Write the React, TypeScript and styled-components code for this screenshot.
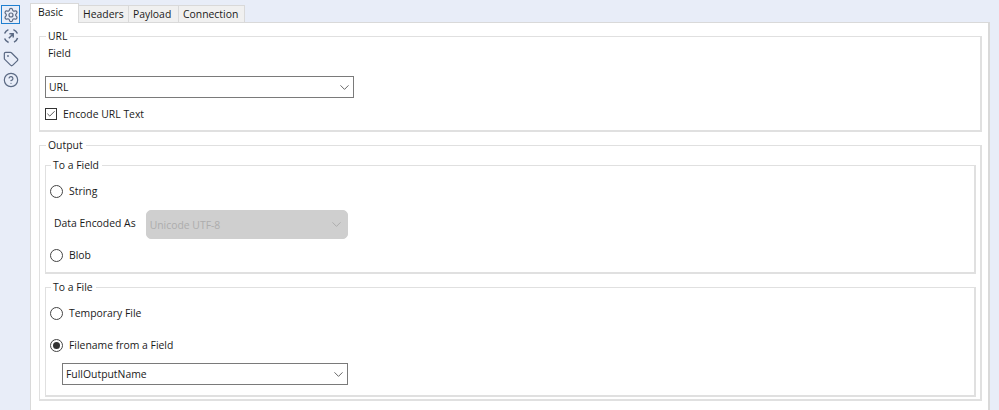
import { Settings, Tag, CircleHelp, ChevronDown, Check } from 'lucide-react';
import styled, { createGlobalStyle } from 'styled-components';

const Global = createGlobalStyle`
  html, body {
    margin: 0;
    height: 100%;
    background: #e8edf8;
    overflow: hidden;
  }
  body {
    font-family: "Open Sans", "Noto Sans", sans-serif;
    font-size: 10.4px;
    color: #1a1a1a;
  }
`;

const Page = styled.div`
  width: 999px;
  height: 410px;
  display: flex;
  box-sizing: border-box;
  padding-top: 1px;
`;

const Sidebar = styled.div`
  width: 30px;
  flex: none;
  display: flex;
  flex-direction: column;
  align-items: flex-start;
  gap: 2px;
  padding: 4px 0 0 1px;
  box-sizing: border-box;
`;

const SideButton = styled.div<{ $active?: boolean; $push?: boolean }>`
  width: 19px;
  height: 19px;
  box-sizing: border-box;
  display: flex;
  align-items: center;
  justify-content: center;
  color: #5b6a84;
  border: 1px solid ${p => (p.$active ? '#1f7fd0' : 'transparent')};
  margin-top: ${p => (p.$push ? '2px' : '0')};
`;

const Main = styled.div`
  width: 960px;
  flex: none;
  display: flex;
  flex-direction: column;
`;

const TabRow = styled.div`
  display: flex;
  align-items: flex-end;
  height: 21px;
  position: relative;
  z-index: 1;
`;

const Tab = styled.div<{ $active?: boolean; $width: number }>`
  box-sizing: border-box;
  width: ${p => p.$width}px;
  height: ${p => (p.$active ? '20px' : '18px')};
  padding: ${p => (p.$active ? '1px 0 0 7px' : '1px 0 0 4px')};
  background: ${p => (p.$active ? '#fff' : '#f0f0f0')};
  border: 1px solid #d9d9d9;
  border-bottom: ${p => (p.$active ? '1px solid #fff' : '1px solid #d9d9d9')};
  margin-left: ${p => (p.$active ? '0' : '-1px')};
  margin-bottom: -1px;
  line-height: 14px;
  white-space: nowrap;
`;

const Panel = styled.div`
  flex: 1;
  background: #fff;
  border: 1px solid #d9d9d9;
  border-width: 1px 2px 0 1px;
  padding: 6px 6px 0 8px;
  display: flex;
  flex-direction: column;
  gap: 6px;
`;

const Group = styled.fieldset<{ $height: number }>`
  margin: 0;
  min-width: 0;
  height: ${p => p.$height}px;
  box-sizing: border-box;
  border: 1px solid #e0e0e0;
  border-width: 1px 2px 2px 1px;
  padding: 0 4px 0 5px;
`;

const Legend = styled.legend`
  margin-left: 1px;
  padding: 0 3px 0 2px;
  line-height: 14px;
`;

const InnerLegend = styled(Legend)`
  margin-left: 0;
`;

const FieldLabel = styled.div`
  line-height: 14px;
  margin: 3px 0 16px 3px;
`;

const Select = styled.div<{ $width: number; $disabled?: boolean }>`
  width: ${p => p.$width}px;
  height: ${p => (p.$disabled ? 29 : 22)}px;
  box-sizing: border-box;
  display: flex;
  align-items: center;
  justify-content: space-between;
  padding: 0 ${p => (p.$disabled ? 3 : 1)}px 0 3px;
  flex: none;
  background: ${p => (p.$disabled ? '#cfcfcf' : '#fff')};
  color: ${p => (p.$disabled ? '#adadad' : '#1a1a1a')};
  border: 1px solid ${p => (p.$disabled ? '#cfcfcf' : '#7a7a7a')};
  border-radius: ${p => (p.$disabled ? '5px' : '0')};
`;

const CheckRow = styled.div`
  display: flex;
  align-items: center;
  gap: 6px;
  height: 14px;
  margin-top: 9px;
`;

const CheckBox = styled.div`
  width: 12px;
  height: 12px;
  box-sizing: border-box;
  border: 1px solid #333;
  display: flex;
  align-items: center;
  justify-content: center;
  background: #fff;
`;

const RadioRow = styled.div`
  display: flex;
  align-items: center;
  gap: 6px;
  height: 14px;
  margin-left: -1px;
`;

const RadioCircle = styled.div<{ $on?: boolean }>`
  width: 13px;
  height: 13px;
  box-sizing: border-box;
  border: 1px solid #444;
  border-radius: 50%;
  display: flex;
  align-items: center;
  justify-content: center;
  &::after {
    content: '';
    display: ${p => (p.$on ? 'block' : 'none')};
    width: 7px;
    height: 7px;
    border-radius: 50%;
    background: #333;
  }
`;

const DataRow = styled.div`
  display: flex;
  align-items: center;
  gap: 10px;
  margin: 3px 0 0 3px;
`;

const DataLabel = styled.span`
  margin-bottom: 3px;
`;

const InnerStack = styled.div<{ $gap: number; $top: number }>`
  display: flex;
  flex-direction: column;
  gap: ${p => p.$gap}px;
  padding-top: ${p => p.$top}px;
`;

const Indented = styled.div`
  padding-left: 11px;
  margin-top: -7px;
`;

function Radio({ label, on }: { label: string; on?: boolean }) {
  return (
    <RadioRow>
      <RadioCircle $on={on} />
      <span>{label}</span>
    </RadioRow>
  );
}

function Drop({ value, width, disabled }: { value: string; width: number; disabled?: boolean }) {
  return (
    <Select $width={width} $disabled={disabled}>
      <span>{value}</span>
      <ChevronDown size={15} strokeWidth={1.3} color={disabled ? '#a5a5a5' : '#444'} />
    </Select>
  );
}

export default function App() {
  return (
    <Page>
      <Global />
      <Sidebar>
        <SideButton $active>
          <Settings size={16} strokeWidth={1.8} />
        </SideButton>
        <SideButton>
          <svg width="16" height="16" viewBox="0 0 16 16" fill="none" stroke="currentColor" strokeWidth="1.5">
            <path d="M1.6 5.6A7 7 0 0 1 5.4 1.6" />
            <path d="M10.4 1.6a7 7 0 0 1 4 4" />
            <path d="M14.6 10a7 7 0 0 1-3.6 4.2" />
            <path d="M5.6 14.5a7 7 0 0 1-4-4" />
            <path d="M5.8 10.2l4-4M6.4 5.8h3.8v3.8" />
          </svg>
        </SideButton>
        <SideButton $push>
          <Tag size={16} strokeWidth={1.8} />
        </SideButton>
        <SideButton>
          <CircleHelp size={16} strokeWidth={1.8} />
        </SideButton>
      </Sidebar>
      <Main>
        <TabRow>
          <Tab $active $width={49}>Basic</Tab>
          <Tab $width={51}>Headers</Tab>
          <Tab $width={51}>Payload</Tab>
          <Tab $width={67}>Connection</Tab>
        </TabRow>
        <Panel>
          <Group $height={103}>
            <Legend>URL</Legend>
            <FieldLabel>Field</FieldLabel>
            <Drop value="URL" width={309} />
            <CheckRow>
              <CheckBox>
                <Check size={12} strokeWidth={1.8} color="#222" />
              </CheckBox>
              <span>Encode URL Text</span>
            </CheckRow>
          </Group>
          <Group $height={263}>
            <Legend>Output</Legend>
            <InnerStack $gap={6} $top={6}>
              <Group $height={116}>
                <InnerLegend>To a Field</InnerLegend>
                <InnerStack $gap={9} $top={12}>
                  <Radio label="String" />
                  <DataRow>
                    <DataLabel>Data Encoded As</DataLabel>
                    <Drop value="Unicode UTF-8" width={202} disabled />
                  </DataRow>
                  <Radio label="Blob" />
                </InnerStack>
              </Group>
              <Group $height={117}>
                <InnerLegend>To a File</InnerLegend>
                <InnerStack $gap={18} $top={12}>
                  <Radio label="Temporary File" />
                  <Radio label="Filename from a Field" on />
                  <Indented>
                    <Drop value="FullOutputName" width={286} />
                  </Indented>
                </InnerStack>
              </Group>
            </InnerStack>
          </Group>
        </Panel>
      </Main>
    </Page>
  );
}
